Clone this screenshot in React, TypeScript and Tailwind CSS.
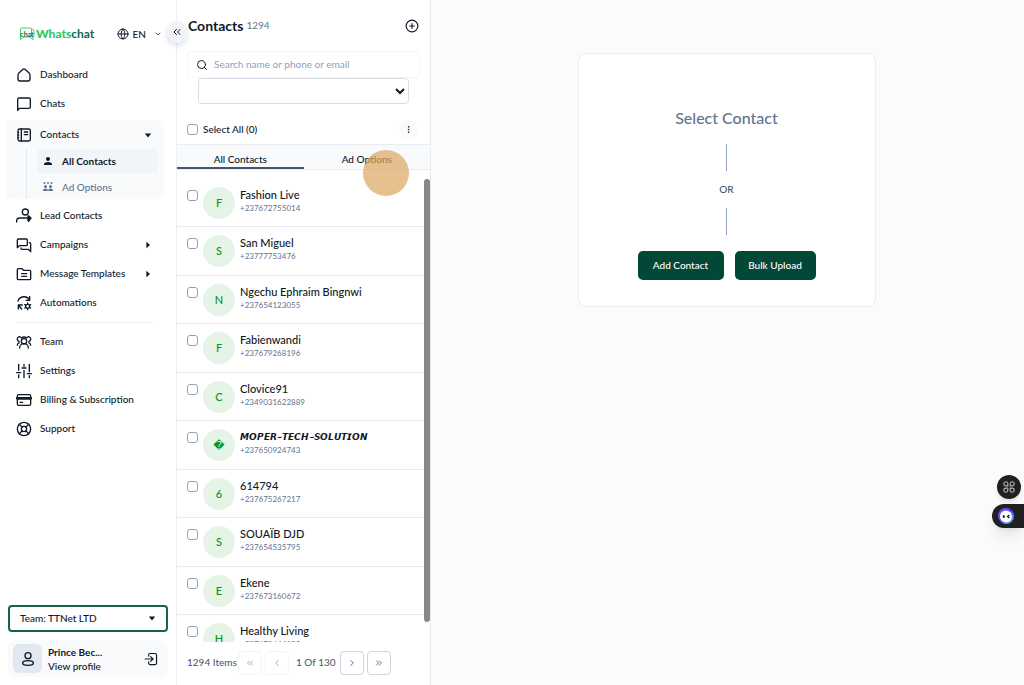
import React, { useState } from 'react';
import {
  ChevronDown,
  ChevronLeft,
  ChevronRight,
  ChevronsLeft,
  ChevronsRight,
  CirclePlus,
  EllipsisVertical,
  Globe,
  LifeBuoy,
  Search,
} from 'lucide-react';
import { MdPerson } from 'react-icons/md';

interface Contact {
  name: string;
  phone: string;
  initial: string;
  styledName?: boolean; // name typed with mathematical letters, drawn by a wider font
}

const CONTACTS: Contact[] = [
  { name: 'Fashion Live', phone: '+237672755014', initial: 'F' },
  { name: 'San Miguel', phone: '+23777753476', initial: 'S' },
  { name: 'Ngechu Ephraim Bingnwi', phone: '+237654123055', initial: 'N' },
  { name: 'Fabienwandi', phone: '+237679268196', initial: 'F' },
  { name: 'Clovice91', phone: '+2349031622889', initial: 'C' },
  { name: '𝙈𝙊𝙋𝙀𝙍~𝙏𝙀𝘾𝙃~𝙎𝙊𝙇𝙐𝙏𝙄𝙊𝙉', phone: '+237650924743', initial: '\uFFFD', styledName: true },
  { name: '614794', phone: '+237675267217', initial: '6' },
  { name: 'SOUAÏB DJD', phone: '+237654535795', initial: 'S' },
  { name: 'Ekene', phone: '+237673160672', initial: 'E' },
  { name: 'Healthy Living', phone: '+237673644332', initial: 'H' },
];

// --- Icons ---
const Icon: React.FC<{ children: React.ReactNode; className?: string }> = ({
  children,
  className = 'h-4 w-4',
}) => (
  <svg
    viewBox="0 0 24 24"
    fill="none"
    stroke="currentColor"
    strokeWidth="2"
    strokeLinecap="round"
    strokeLinejoin="round"
    className={`${className} shrink-0`}
    aria-hidden="true"
  >
    {children}
  </svg>
);

const HomeIcon = () => (
  <Icon>
    <path d="M4 9.500 10 3.700a2.800 2.800 0 0 1 4 0l6 5.800c.7.8 1 1.600 1 2.600V18a3 3 0 0 1-3 3H6a3 3 0 0 1-3-3v-5.900c0-1 .3-1.800 1-2.600Z" />
  </Icon>
);

const ChatIcon = () => (
  <Icon>
    <path d="M2.500 21.500V5a2 2 0 0 1 2-2h15a2 2 0 0 1 2 2v11.500a2 2 0 0 1-2 2H5.500Z" />
  </Icon>
);

const BookIcon = () => (
  <Icon>
    <rect x="3" y="3" width="18.500" height="18" rx="2.500" />
    <path d="M8 3v18M12.500 7.500h5M12.500 11.500h5M3 8h1M3 12h1M3 16h1" />
  </Icon>
);

const LeadIcon = () => (
  <Icon>
    <circle cx="14" cy="6" r="4.500" />
    <path d="M1 21v-1.500A4.500 4.500 0 0 1 5.500 15H22M19 12l3 3-3 5" />
    <path d="m18 12 4.500 3.500L18 19Z" fill="currentColor" />
  </Icon>
);

const CampaignIcon = () => (
  <Icon>
    <path d="M2 16V4.500A1.500 1.500 0 0 1 3.500 3h12A1.500 1.500 0 0 1 17 4.500v7a1.500 1.500 0 0 1-1.500 1.500H5Z" />
    <path d="M20 8.500h.5A1.500 1.500 0 0 1 22 10v12l-3.500-3.500H9A1.500 1.500 0 0 1 7.500 17v-.5" />
  </Icon>
);

const TemplateIcon = () => (
  <Icon>
    <path d="M2 5.500A1.500 1.500 0 0 1 3.500 4H9l2.500 2.500h9A1.500 1.500 0 0 1 22 8v11a1.500 1.500 0 0 1-1.500 1.500h-17A1.500 1.500 0 0 1 2 19ZM8.500 11.500h7.500M8.500 15.500h7.500" />
  </Icon>
);

const AutomationIcon = () => (
  <Icon>
    <path d="M3 9a9.500 9.500 0 0 1 17-2M20.500 2v6h-5.500M3.500 21v-6h6M3.500 15l5 6" />
    <circle cx="17.500" cy="17" r="3" />
    <path d="M17.500 12v1.500M17.500 20.500V22M13 14.500l1.500.8M20.500 18.700l1.500.8M13 19.500l1.500-.8M20.500 15.300l1.500-.8" />
  </Icon>
);

const TeamIcon = () => (
  <Icon>
    <circle cx="12" cy="11" r="4" />
    <path d="M5.500 21a6.500 6.500 0 0 1 13 0M7 4.500A3.500 3.500 0 1 0 4.500 11M17 4.500A3.500 3.500 0 1 1 19.500 11M2 17q0-3 3-4M22 17q0-3-3-4M8 6q4-3 8 0" />
  </Icon>
);

const SettingsIcon = () => (
  <Icon>
    <path d="M4 2v9M4 18v4M12 2v3M12 11v11M20 2v11M20 19v3M1 14.500h6M9 7.500h6M17 16h6" />
  </Icon>
);

const CardIcon = () => (
  <Icon>
    <rect x="2" y="4" width="20" height="16" rx="2" />
    <path d="M2 9.500h20" strokeWidth="4" />
    <path d="M6 15.500h4" />
  </Icon>
);

const GroupIcon = () => (
  <svg viewBox="0 0 24 24" fill="currentColor" className="h-3 w-3 shrink-0" aria-hidden="true">
    <circle cx="5" cy="4" r="2" />
    <circle cx="12" cy="4" r="2" />
    <circle cx="19" cy="4" r="2" />
    <circle cx="7" cy="11" r="3" />
    <circle cx="17" cy="11" r="3" />
    <path d="M2 20v-2q0-3 5-3t4.500 3v2ZM12.500 20v-2q0-3 4.500-3t5 3v2Z" />
  </svg>
);

const Caret: React.FC<{ down?: boolean }> = ({ down }) => (
  <svg viewBox="0 0 10 10" fill="currentColor" className="h-2 w-2 shrink-0" aria-hidden="true">
    <path d={down ? 'M1 3h8L5 8Z' : 'M3 1v8l4.500-4Z'} />
  </svg>
);

const Logo = () => (
  <a href="#" className="flex items-center text-[12px] leading-4" aria-label="Whatschat">
    <span className="relative mr-px flex h-[14px] w-4 items-center justify-center">
      <svg viewBox="0 0 32 28" fill="none" className="absolute inset-0 h-full w-full" aria-hidden="true">
        <path d="M3 4q0-2 2-2h18q2 0 2 2v14q0 2-2 2H10l-7 5ZM25 4q5 0 5 6v7q0 3-3 4l2 4-7-4" stroke="#3fd077" strokeWidth="2" />
      </svg>
      <span className="relative text-[7px] font-bold leading-none text-[#0c6b4c]">chat</span>
    </span>
    <span className="font-black text-[#2bc863]">Whats</span>
    <span className="font-bold text-[#12644a]">chat</span>
  </a>
);

// --- Sidebar ---
interface NavItemProps {
  icon: React.ReactNode;
  label: string;
  caret?: 'down' | 'right';
}

const NavItem: React.FC<NavItemProps> = ({ icon, label, caret }) => (
  <a href="#" className="flex h-[29px] items-center gap-2 pl-4 pr-3 text-[10px] font-medium">
    {icon}
    <span className="flex-1 whitespace-nowrap">{label}</span>
    {caret && <Caret down={caret === 'down'} />}
  </a>
);

const Sidebar: React.FC = () => (
  <aside className="relative z-10 flex w-[177px] shrink-0 flex-col border-r border-[#eceff3] bg-white">
    <div className="flex h-[60px] items-center pl-[19px] pr-[14px] pt-2">
      <Logo />
      <button className="ml-auto flex items-center gap-1 text-[10px] font-medium">
        <Globe className="h-3 w-3" />
        <span>EN</span>
        <ChevronDown className="ml-1 h-2 w-2" />
      </button>
    </div>
    <button
      aria-label="Collapse menu"
      className="absolute -right-3 top-[21px] flex h-[22px] w-[22px] items-center justify-center rounded-full bg-[#f1f5f9] shadow-md"
    >
      <ChevronsLeft className="h-3 w-3" />
    </button>

    <nav className="pr-3">
      <NavItem icon={<HomeIcon />} label="Dashboard" />
      <NavItem icon={<ChatIcon />} label="Chats" />
      <div className="my-[2px] ml-[6px] rounded-md bg-[#f8fafc]">
        <div className="-ml-[6px]">
          <NavItem icon={<BookIcon />} label="Contacts" caret="down" />
        </div>
        <div className="ml-[20px] flex flex-col gap-[2px] border-l border-[#e5e9ef] pl-[10px] pr-[6px] text-[10px]">
          <a href="#" className="flex h-6 items-center gap-2 rounded bg-[#f1f5f9] pl-[5px] font-bold">
            <MdPerson className="h-3 w-3" />
            All Contacts
          </a>
          <a href="#" className="flex h-6 items-center gap-2 pl-[5px] font-medium text-slate-500">
            <GroupIcon />
            Ad Options
          </a>
        </div>
      </div>
      <NavItem icon={<LeadIcon />} label="Lead Contacts" />
      <NavItem icon={<CampaignIcon />} label="Campaigns" caret="right" />
      <NavItem icon={<TemplateIcon />} label="Message Templates" caret="right" />
      <NavItem icon={<AutomationIcon />} label="Automations" />
      <hr className="mb-1 ml-4 mr-[10px] mt-[5px] border-[#eceff3]" />
      <NavItem icon={<TeamIcon />} label="Team" />
      <NavItem icon={<SettingsIcon />} label="Settings" />
      <NavItem icon={<CardIcon />} label="Billing & Subscription" />
      <NavItem icon={<LifeBuoy className="h-4 w-4 shrink-0" />} label="Support" />
    </nav>

    <div className="mt-auto flex flex-col gap-2 p-2">
      <div className="relative">
        <select
          aria-label="Team"
          className="h-[27px] w-full appearance-none rounded border-2 border-[#17634a] bg-white pl-[10px] text-[10px] font-medium"
        >
          <option>Team: TTNet LTD</option>
        </select>
        <span className="pointer-events-none absolute inset-y-0 right-3 flex items-center">
          <Caret down />
        </span>
      </div>
      <div className="flex items-center gap-[6px] rounded-lg bg-[#f8fafc] py-1 pl-[5px] pr-[10px]">
        <span className="flex h-[29px] w-[29px] items-center justify-center rounded-md bg-[#e2e8f0]">
          <Icon>
            <circle cx="12" cy="7" r="4.500" />
            <path d="M12 14.500c5 0 8 1.500 8 4s-3 3-8 3-8-.5-8-3 3-4 8-4Z" />
          </Icon>
        </span>
        <div className="flex-1 text-[10px] leading-[14px]">
          <p className="font-bold">Prince Bec...</p>
          <a href="#" className="font-medium">View profile</a>
        </div>
        <button aria-label="Log out">
          <Icon className="h-[14px] w-[14px]">
            <path d="M8 7V5a2.500 2.500 0 0 1 2.500-2.500H19A2.500 2.500 0 0 1 21.500 5v14a2.500 2.500 0 0 1-2.500 2.500h-8.500A2.500 2.500 0 0 1 8 19v-2M2 12h13M11.500 8l4 4-4 4" />
          </Icon>
        </button>
      </div>
    </div>
  </aside>
);

// --- Contact list ---
const ContactRow: React.FC<{ contact: Contact }> = ({ contact }) => (
  <li className="flex h-[49px] shrink-0 items-start border-b border-[#e9ecf1] pl-[10px] pt-2 odd:h-[48px]">
    <input
      type="checkbox"
      aria-label={`Select ${contact.name}`}
      className="mt-[3px] h-[11px] w-[11px] shrink-0 appearance-none rounded-[3px] border border-gray-400 bg-white"
    />
    <span className="ml-[5px] flex h-8 w-8 shrink-0 items-center justify-center rounded-full bg-[#e6f3e7] text-[11px] font-medium text-[#0c9417]">
      {contact.initial}
    </span>
    <div className="ml-[5px] whitespace-nowrap">
      <p
        className={`h-[15px] font-medium leading-[16px] text-gray-900 ${
          contact.styledName ? 'text-[9px]' : 'text-[11px]'
        }`}
      >
        {contact.name}
      </p>
      <p className="text-[8px] leading-[13px] text-slate-500">{contact.phone}</p>
    </div>
  </li>
);

const PAGE_BUTTON =
  'flex h-6 w-6 items-center justify-center rounded border border-slate-300 bg-white disabled:border-slate-100 disabled:text-slate-400';

const ContactPanel: React.FC = () => {
  const [tab, setTab] = useState<'all' | 'ads'>('all');

  return (
    <section className="relative flex w-[254px] shrink-0 flex-col border-r border-[#e9ecf1] bg-white">
      <div className="flex h-[51px] items-center px-[11px]">
        <h1 className="text-[14px] font-bold">Contacts</h1>
        <span className="ml-[3px] text-[10px] text-slate-500">1294</span>
        <button aria-label="Add contact" className="ml-auto">
          <CirclePlus className="h-[14px] w-[14px]" />
        </button>
      </div>

      <label className="mx-[10px] flex h-[27px] items-center gap-[6px] rounded border border-[#f3f5f7] px-2">
        <Search className="h-3 w-3 shrink-0" />
        <input
          type="text"
          aria-label="Search contacts"
          placeholder="Search name or phone or email"
          className="min-w-0 flex-1 text-[10px] outline-none placeholder:text-slate-400"
        />
      </label>
      <select
        aria-label="Filter"
        className="mx-[21px] h-[26px] rounded border border-[#d9dde3] bg-white text-[8px]"
      />

      <div className="flex h-10 items-center px-[10px] pt-[10px]">
        <label className="flex items-center gap-[5px] text-[10px] font-medium">
          <input
            type="checkbox"
            className="h-[11px] w-[11px] appearance-none rounded-[3px] border border-gray-400 bg-white"
          />
          Select All (0)
        </label>
        <button aria-label="More" className="ml-auto mr-[2px] flex h-[19px] w-[19px] items-center justify-center rounded-full bg-[#f8fafc]">
          <EllipsisVertical className="h-[9px] w-[9px]" />
        </button>
      </div>

      <div role="tablist" className="flex h-[26px] border-y border-[#e9ecf1] bg-[#f8fafc] pt-1 text-[10px] font-medium">
        <button
          role="tab"
          aria-selected={tab === 'all'}
          onClick={() => setTab('all')}
          className="flex-1 border-b-2 border-transparent leading-5 aria-selected:border-slate-600"
        >
          All Contacts
        </button>
        <button
          role="tab"
          aria-selected={tab === 'ads'}
          onClick={() => setTab('ads')}
          className="flex-1 border-b-2 border-transparent leading-5 aria-selected:border-slate-600"
        >
          Ad Options
        </button>
      </div>

      <div className="mt-[9px] flex min-h-0 flex-1 basis-0 overflow-hidden">
        <ul className="flex flex-1 flex-col overflow-hidden">
          {CONTACTS.map(c => (
            <ContactRow key={c.phone} contact={c} />
          ))}
        </ul>
        <div className="mb-5 w-[6px] rounded-full bg-[#888888]" />
      </div>

      <div className="flex h-[43px] shrink-0 items-center gap-[3px] px-[10px] pb-[2px] text-[10px] text-slate-600">
        <span className="w-12 whitespace-nowrap">1294 Items</span>
        <button aria-label="First page" disabled className={PAGE_BUTTON}>
          <ChevronsLeft className="h-[10px] w-[10px]" />
        </button>
        <button aria-label="Previous page" disabled className={PAGE_BUTTON}>
          <ChevronLeft className="h-[10px] w-[10px]" />
        </button>
        <span className="ml-1 w-[41px] whitespace-nowrap">1 Of 130</span>
        <button aria-label="Next page" className={PAGE_BUTTON}>
          <ChevronRight className="h-[10px] w-[10px]" />
        </button>
        <button aria-label="Last page" className={PAGE_BUTTON}>
          <ChevronsRight className="h-[10px] w-[10px]" />
        </button>
      </div>

      {/* Click highlight */}
      <span className="pointer-events-none absolute right-[21px] top-[150px] h-[46px] w-[46px] rounded-full bg-[#dca660]/70" />
    </section>
  );
};

// --- Empty state ---
const EmptyState: React.FC = () => (
  <main className="min-w-0 flex-1 bg-[#f9fcfb] pr-[2px] pt-[53px]">
    <div className="mx-auto flex w-[298px] flex-col items-center rounded-lg border border-[#e9edf0] bg-white pb-[26px] pt-[52px]">
      <h2 className="text-[16px] font-medium leading-6 text-slate-500">Select Contact</h2>
      <span className="mt-[14px] h-[27px] w-px bg-slate-400" />
      <span className="my-[10px] text-[10px] font-medium leading-[17px] text-slate-600">OR</span>
      <span className="h-[27px] w-px bg-slate-400" />
      <div className="mt-4 flex gap-[11px] text-[10px] font-medium text-white">
        <button className="h-[29px] w-[86px] rounded-[5px] bg-[#034737]">Add Contact</button>
        <button className="h-[29px] w-[81px] rounded-[5px] bg-[#034737]">Bulk Upload</button>
      </div>
    </div>
  </main>
);

const FloatingTools: React.FC = () => (
  <div className="fixed bottom-[157px] right-0 flex flex-col items-end gap-[5px]">
    <button
      aria-label="Apps"
      className="mr-[3px] flex h-6 w-6 items-center justify-center rounded-full bg-[#202020] text-[#b0b0b0] shadow-md"
    >
      <Icon className="h-[14px] w-[14px]">
        <path d="M10 10H6a3.500 3.500 0 1 1 4-4ZM14 10h4a3.500 3.500 0 1 0-4-4ZM10 14H6a3.500 3.500 0 1 0 4 4ZM14 14h4a3.500 3.500 0 1 1-4 4Z" />
      </Icon>
    </button>
    <button
      aria-label="Assistant"
      className="flex h-6 w-8 items-center rounded-l-full bg-[#202020] pl-[6px] shadow-lg"
    >
      <svg viewBox="0 0 32 32" className="h-4 w-4" aria-hidden="true">
        <defs>
          <linearGradient id="ring" x1="0" y1="0" x2="1" y2="1">
            <stop offset="0" stopColor="#a34dff" />
            <stop offset="0.5" stopColor="#3d4bff" />
            <stop offset="1" stopColor="#6fd0ff" />
          </linearGradient>
        </defs>
        <circle cx="16" cy="16" r="16" fill="url(#ring)" />
        <circle cx="16" cy="17" r="12" fill="#fff" />
        <ellipse cx="11.500" cy="17" rx="2" ry="3" fill="#111" />
        <path d="m23 14-4 3 4 3" stroke="#111" strokeWidth="2.500" fill="none" />
      </svg>
    </button>
  </div>
);

const App: React.FC = () => {
  return (
    <div className="flex h-screen overflow-hidden bg-white font-['Lato','DejaVu_Sans',sans-serif] text-gray-900">
      <Sidebar />
      <ContactPanel />
      <EmptyState />
      <FloatingTools />
    </div>
  );
};

export default App;
